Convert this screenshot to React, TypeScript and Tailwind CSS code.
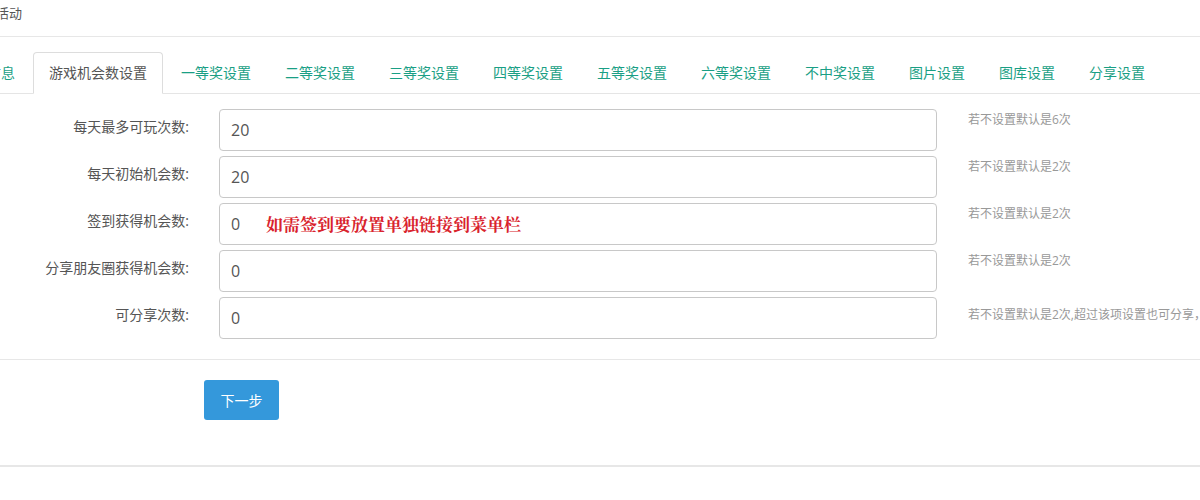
import * as React from "react";

const tabs = [
  "基本信息",
  "游戏机会数设置",
  "一等奖设置",
  "二等奖设置",
  "三等奖设置",
  "四等奖设置",
  "五等奖设置",
  "六等奖设置",
  "不中奖设置",
  "图片设置",
  "图库设置",
  "分享设置",
];

const rows = [
  { label: "每天最多可玩次数:", value: "20", help: "若不设置默认是6次" },
  { label: "每天初始机会数:", value: "20", help: "若不设置默认是2次" },
  { label: "签到获得机会数:", value: "0", help: "若不设置默认是2次", note: "如需签到要放置单独链接到菜单栏" },
  { label: "分享朋友圈获得机会数:", value: "0", help: "若不设置默认是2次" },
  { label: "可分享次数:", value: "0", help: "若不设置默认是2次,超过该项设置也可分享，但不会获得机会", low: true },
];

const App = () => {
  const [active, setActive] = React.useState(1);

  return (
    <div
      className="w-[1200px] h-[500px] overflow-hidden bg-white text-[#555]"
      style={{ fontFamily: '"Open Sans", "Noto Sans CJK SC", sans-serif' }}
    >
      {/* page title */}
      <div className="h-[37px] border-b border-[#e7e7e7] pt-[4px]">
        <div className="-ml-[30px] text-[13px] leading-[18px] text-[#555]">编辑活动</div>
      </div>

      {/* tabs */}
      <div className="pt-[15px]">
        <div className="flex -ml-[57px] border-b border-[#e5e5e5] whitespace-nowrap">
          {tabs.map((t, i) => (
            <button
              key={t}
              onClick={() => setActive(i)}
              className={`shrink-0 px-[15px] py-[10px] mr-[2px] -mb-px text-[14px] leading-[20px] border rounded-t-[4px] ${
                active === i
                  ? "border-[#ddd] border-b-white bg-white text-[#555]"
                  : "border-transparent text-[#1a9f85]"
              }`}
            >
              {t}
            </button>
          ))}
        </div>
      </div>

      {/* form */}
      <div className="pt-[15px] pb-[20px] border-b border-[#e7e7e7] flex flex-col gap-[5px]">
        {rows.map((r) => (
          <div key={r.label} className="flex items-start whitespace-nowrap">
            <div className="w-[189px] shrink-0 text-right pt-[8px] text-[14px] leading-[20px] text-[#555]">{r.label}</div>
            <div className="relative ml-[30px] w-[718px] shrink-0">
              <input
                defaultValue={r.value}
                className="w-full h-[42px] border border-[#c8c8c8] rounded-[4px] px-[11px] text-[16px] text-[#555] outline-none"
              />
              {r.note && (
                <span
                  className="absolute left-[47px] top-[10px] text-[17px] leading-[22px] font-bold text-[#d9232d] pointer-events-none"
                  style={{ fontFamily: '"Noto Serif CJK SC", "Noto Sans CJK SC", serif' }}
                >
                  {r.note}
                </span>
              )}
            </div>
            <div className={`ml-[31px] shrink-0 text-[12px] leading-[16px] text-[#999] ${r.low ? "pt-[10px]" : "pt-[3px]"}`}>
              {r.help}
            </div>
          </div>
        ))}
      </div>

      {/* actions */}
      <div className="pt-[20px] pb-[45px] border-b-2 border-[#e7e7e7]">
        <button className="ml-[204px] w-[75px] h-[40px] rounded-[3px] bg-[#3498db] text-white text-[14px]">
          下一步
        </button>
      </div>
    </div>
  );
};

export default App;
